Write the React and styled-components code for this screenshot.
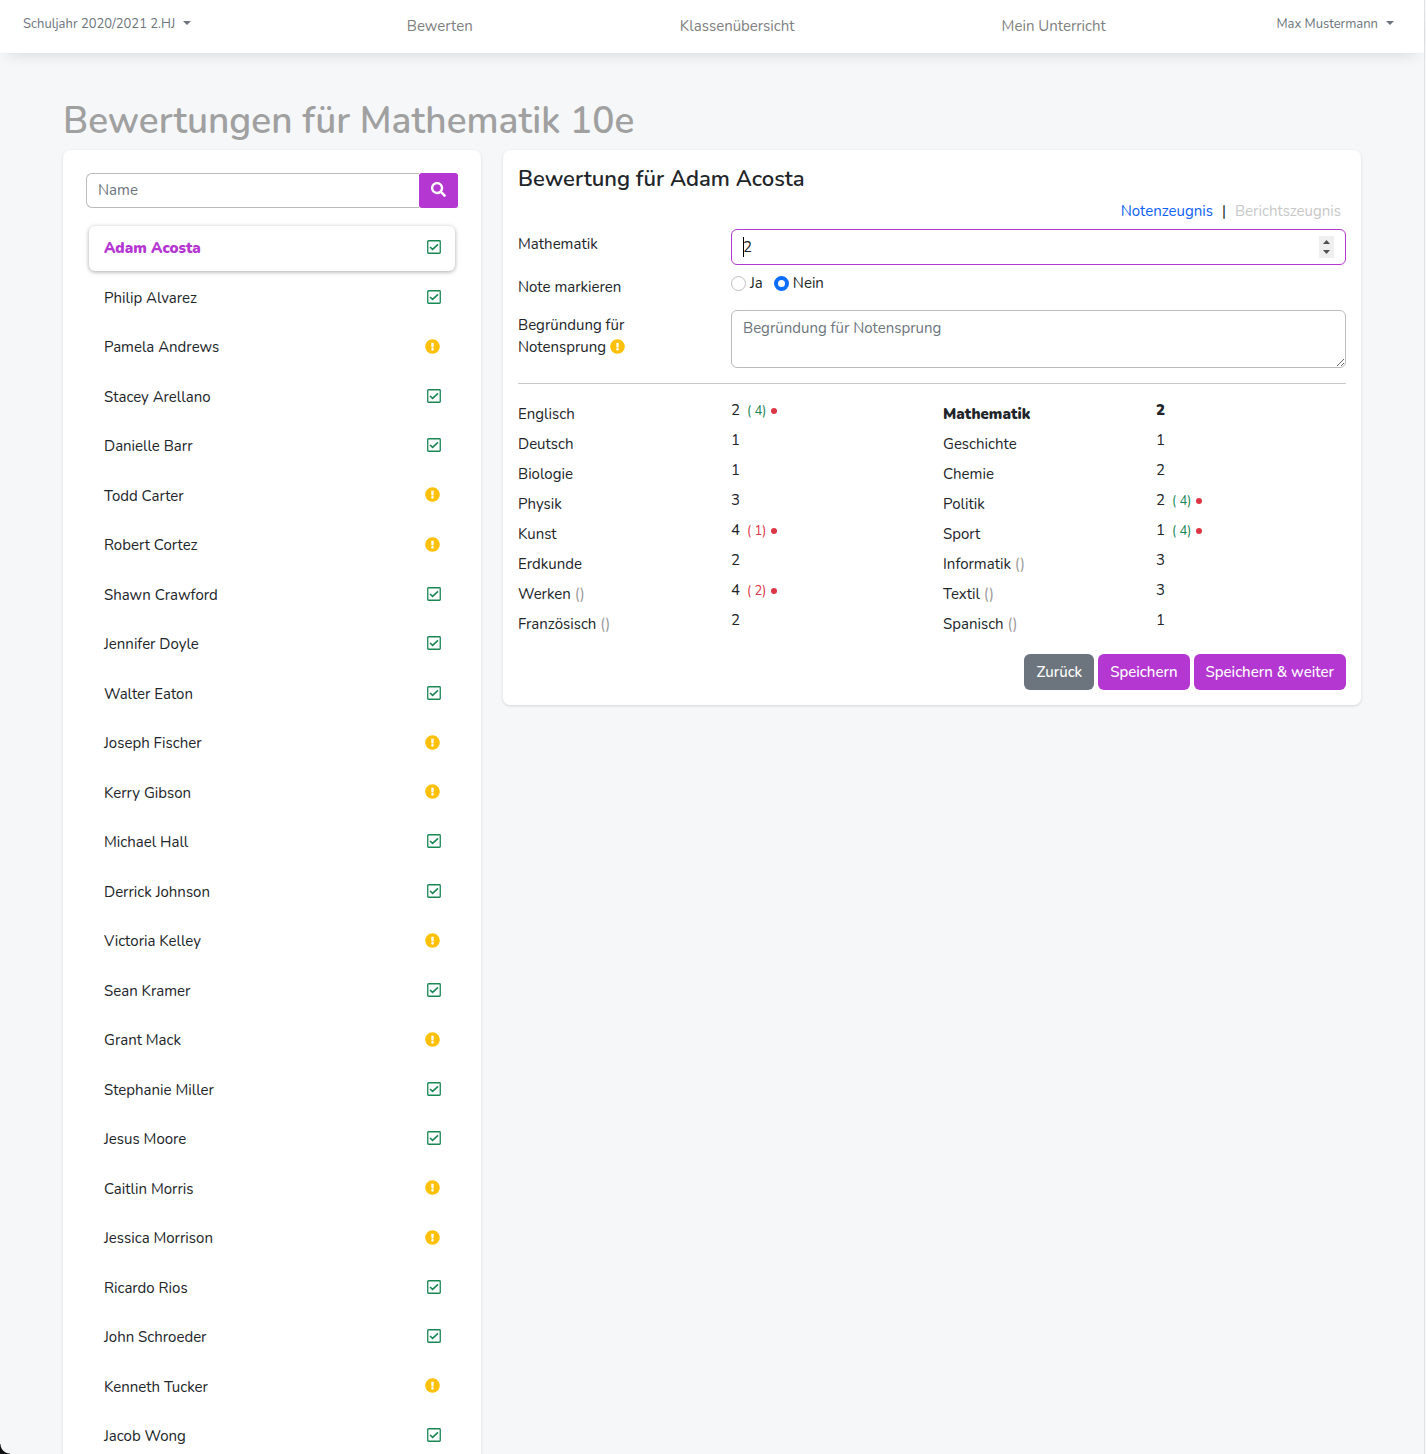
import React from 'react';
import styled, { createGlobalStyle } from 'styled-components';
import { FaSearch, FaExclamationCircle } from 'react-icons/fa';

const Global = createGlobalStyle`
  *, *::before, *::after { box-sizing: border-box; }
  body {
    margin: 0;
    background: #f5f7f9;
    color: #212529;
    font-family: Nunito, Lato, "Open Sans", sans-serif;
    font-size: 15px;
    line-height: 1.5;
  }
  button, input, textarea { font: inherit; color: inherit; }
`;

const Page = styled.div`
  margin-right: 1px;
  border-right: 1px solid #e3e4e6;
`;

const WindowCorner = styled.div`
  position: fixed;
  bottom: 0;
  left: 0;
  width: 10px;
  height: 10px;
  background: radial-gradient(circle at top right, transparent 9px, #111 10px);
`;

const TopBar = styled.header`
  display: flex;
  align-items: flex-start;
  height: 53px;
  padding: 0 30px 0 23px;
  background: #fff;
  box-shadow: 0 8px 16px -8px rgba(0, 0, 0, 0.15);
`;

const MenuButton = styled.button`
  display: flex;
  align-items: center;
  gap: 8px;
  margin: ${(p) => (p.$end ? '0 0 0 67px' : '0 112px 0 0')};
  padding: 14px 0;
  border: 0;
  background: none;
  color: #6c757d;
  font-size: 13px;
  line-height: 20px;
  white-space: nowrap;
  &::after {
    content: '';
    margin-bottom: 2px;
    border: 4px solid transparent;
    border-top-color: currentColor;
    border-bottom: 0;
  }
`;

const Tabs = styled.nav`
  display: flex;
  flex: 1;
  a {
    flex: 1 1 auto;
    padding: 15px 0;
    color: #808080;
    text-align: center;
    text-decoration: none;
    line-height: 22px;
  }
`;

const Main = styled.main`
  padding: 46px 63px 0;
`;

const Title = styled.h1`
  margin: 0 0 6px;
  color: #a0a0a0;
  font-size: 37px;
  font-weight: 600;
  line-height: 45px;
`;

const Columns = styled.div`
  display: flex;
  align-items: flex-start;
  margin: 0 -11px;
`;

const Column = styled.div`
  width: calc(100% * ${(p) => p.$span} / 3);
  padding: 0 11px;
`;

const Card = styled.section`
  padding: ${(p) => p.$pad};
  border-radius: 7px;
  background: #fff;
  box-shadow: 0 1px 3px rgba(0, 0, 0, 0.14);
`;

const Search = styled.form`
  display: flex;
  height: 35px;
  margin-bottom: 18px;
  input {
    flex: 1;
    min-width: 0;
    padding: 0 11px;
    border: 1px solid #bcbcbc;
    border-right: 0;
    border-radius: 6px 0 0 6px;
    background: #fff;
    outline: 0;
  }
  input::placeholder { color: #6c757d; opacity: 1; }
  button {
    display: grid;
    place-items: center;
    width: 39px;
    padding: 0 0 2px;
    border: 0;
    border-radius: 3px;
    background: #b537d2;
    color: #fff;
  }
`;

const Students = styled.ul`
  margin: 0;
  padding: 0 3px;
  list-style: none;
`;

const Student = styled.li`
  margin-bottom: 5px;
  border-radius: 6px;
  box-shadow: ${(p) => (p.$active ? '0 1px 4px rgba(0, 0, 0, 0.35)' : 'none')};
  a {
    display: flex;
    align-items: center;
    justify-content: space-between;
    padding: 11px 14px 11px 15px;
    color: ${(p) => (p.$active ? '#b537d2' : 'inherit')};
    font-weight: ${(p) => (p.$active ? 900 : 400)};
    text-decoration: none;
  }
`;

const Icon = styled.span`
  display: inline-flex;
  justify-content: ${(p) => (p.$ok ? 'flex-end' : 'flex-start')};
  width: 16px;
  padding-bottom: 2px;
  color: ${(p) => (p.$ok ? '#198754' : '#ffc107')};
  vertical-align: -4px;
`;

const CardTitle = styled.h2`
  margin: 0;
  font-size: 22px;
  font-weight: 600;
  line-height: 29px;
`;

const ReportTabs = styled.div`
  display: flex;
  justify-content: flex-end;
  gap: 9px;
  margin: 6px 5px 7px;
  line-height: 22px;
  a { color: #0d62f5; text-decoration: none; }
  a[aria-disabled] { color: #c8c8c8; }
`;

const Field = styled.div`
  display: grid;
  grid-template-columns: 213px 1fr;
  min-height: ${(p) => p.$min};
`;

const Label = styled.label`
  max-width: 140px;
  padding-top: 4px;
  line-height: 22px;
  ${Icon} { vertical-align: -2px; padding: 0; }
`;

const GradeBox = styled.div`
  position: relative;
  height: 36px;
`;

const GradeInput = styled.input`
  width: 100%;
  height: 36px;
  padding: 0 11px;
  border: 1px solid #b537d2;
  border-radius: 6px;
  background: #fff;
  outline: 0;
  appearance: textfield;
  caret-color: transparent;
  &::-webkit-inner-spin-button { appearance: none; }
`;

const Caret = styled.span`
  position: absolute;
  top: 8px;
  left: 12px;
  width: 1px;
  height: 20px;
  background: #000;
`;

const Stepper = styled.svg`
  position: absolute;
  top: 7px;
  right: 12px;
  background: #efefef;
`;

const Choices = styled.div`
  display: flex;
  align-items: flex-start;
  gap: 11px;
  label {
    display: flex;
    align-items: center;
    gap: 4px;
    line-height: 22px;
  }
  input {
    appearance: none;
    width: 15px;
    height: 15px;
    margin: 0;
    border: 1px solid #bfbfbf;
    border-radius: 50%;
    background: #fff;
  }
  input:checked { border: 4px solid #0d6efd; }
`;

const Reason = styled.textarea`
  height: 58px;
  padding: 6px 11px;
  border: 1px solid #bcbcbc;
  border-radius: 6px;
  background: #fff;
  line-height: 22px;
  resize: vertical;
  &::placeholder { color: #6c757d; opacity: 1; }
`;

const Divider = styled.hr`
  height: 1px;
  margin: 15px 0;
  border: 0;
  background: #c8c9ca;
`;

const Grades = styled.dl`
  display: grid;
  grid-template-columns: 1fr 1fr;
  column-gap: 22px;
  margin: 0 0 15px;
`;

const Grade = styled.div`
  display: grid;
  grid-template-columns: 213px 1fr;
  height: 30px;
  line-height: 22px;
  font-weight: ${(p) => (p.$bold ? 900 : 400)};
  dt { padding-top: 4px; }
  dd { display: flex; align-items: center; height: 22px; margin: 0; }
`;

const Muted = styled.span`
  color: #999;
`;

const Previous = styled.span`
  display: flex;
  align-items: center;
  gap: 5px;
  margin-left: 7px;
  padding-top: 2px;
  color: ${(p) => (p.$better ? '#198754' : '#dc3545')};
  font-size: 13px;
  &::after {
    content: '';
    width: 6px;
    height: 6px;
    border-radius: 50%;
    background: #dc3545;
  }
`;

const Actions = styled.div`
  display: flex;
  justify-content: flex-end;
  gap: 4px;
`;

const Button = styled.button`
  height: 36px;
  padding: 0 12px;
  border: 0;
  border-radius: 6px;
  background: ${(p) => (p.$secondary ? '#6c757d' : '#b537d2')};
  color: #fff;
  font-weight: 500;
`;

const students = [
  ['Adam Acosta', 1], ['Philip Alvarez', 1], ['Pamela Andrews', 0], ['Stacey Arellano', 1],
  ['Danielle Barr', 1], ['Todd Carter', 0], ['Robert Cortez', 0], ['Shawn Crawford', 1],
  ['Jennifer Doyle', 1], ['Walter Eaton', 1], ['Joseph Fischer', 0], ['Kerry Gibson', 0],
  ['Michael Hall', 1], ['Derrick Johnson', 1], ['Victoria Kelley', 0], ['Sean Kramer', 1],
  ['Grant Mack', 0], ['Stephanie Miller', 1], ['Jesus Moore', 1], ['Caitlin Morris', 0],
  ['Jessica Morrison', 0], ['Ricardo Rios', 1], ['John Schroeder', 1], ['Kenneth Tucker', 0],
  ['Jacob Wong', 1],
];

const grades = [
  { name: 'Englisch', grade: 2, prev: 4 }, { name: 'Mathematik', grade: 2, bold: true },
  { name: 'Deutsch', grade: 1 }, { name: 'Geschichte', grade: 1 },
  { name: 'Biologie', grade: 1 }, { name: 'Chemie', grade: 2 },
  { name: 'Physik', grade: 3 }, { name: 'Politik', grade: 2, prev: 4 },
  { name: 'Kunst', grade: 4, prev: 1 }, { name: 'Sport', grade: 1, prev: 4 },
  { name: 'Erdkunde', grade: 2 }, { name: 'Informatik', grade: 3, course: true },
  { name: 'Werken', grade: 4, prev: 2, course: true }, { name: 'Textil', grade: 3, course: true },
  { name: 'Französisch', grade: 2, course: true }, { name: 'Spanisch', grade: 1, course: true },
];

const CheckSquare = () => (
  <svg width="14" height="14" viewBox="0 0 14 14" fill="none" stroke="currentColor" aria-hidden="true">
    <rect x="0.75" y="0.75" width="12.5" height="12.5" rx="0.8" strokeWidth="1.3" />
    <path d="M3 7 5.6 9.4 11 4.4" strokeWidth="1.6" />
  </svg>
);

const Status = ({ ok }) => (
  <Icon $ok={ok}>{ok ? <CheckSquare /> : <FaExclamationCircle size={15} />}</Icon>
);

export default function App() {
  return (
    <Page>
      <Global />
      <TopBar>
        <MenuButton type="button">Schuljahr 2020/2021 2.HJ</MenuButton>
        <Tabs>
          <a href="#bewerten">Bewerten</a>
          <a href="#klassen">Klassenübersicht</a>
          <a href="#unterricht">Mein Unterricht</a>
        </Tabs>
        <MenuButton type="button" $end>Max Mustermann</MenuButton>
      </TopBar>
      <Main>
        <Title>Bewertungen für Mathematik 10e</Title>
        <Columns>
          <Column $span={1}>
            <Card $pad="23px">
              <Search>
                <input type="text" placeholder="Name" aria-label="Name" />
                <button type="button" aria-label="Suchen"><FaSearch size={15} /></button>
              </Search>
              <Students>
                {students.map(([name, ok], i) => (
                  <Student key={name} $active={i === 0}>
                    <a href="#schueler">{name}<Status ok={!!ok} /></a>
                  </Student>
                ))}
              </Students>
            </Card>
          </Column>
          <Column $span={2}>
            <Card $pad="15px">
              <CardTitle>Bewertung für Adam Acosta</CardTitle>
              <ReportTabs>
                <a href="#noten">Notenzeugnis</a>
                <span>|</span>
                <a href="#bericht" aria-disabled="true">Berichtszeugnis</a>
              </ReportTabs>
              <Field $min="43px">
                <Label htmlFor="grade">Mathematik</Label>
                <GradeBox>
                  <GradeInput id="grade" type="number" defaultValue="2" autoFocus />
                  <Caret />
                  <Stepper width="15" height="22" viewBox="0 0 15 22" fill="#505050" aria-hidden="true">
                    <path d="M4 8 7.5 4 11 8ZM4 14 7.5 18 11 14Z" />
                  </Stepper>
                </GradeBox>
              </Field>
              <Field $min="38px" role="radiogroup" aria-labelledby="mark">
                <Label as="span" id="mark">Note markieren</Label>
                <Choices>
                  <label><input type="radio" name="mark" />Ja</label>
                  <label><input type="radio" name="mark" defaultChecked />Nein</label>
                </Choices>
              </Field>
              <Field $min="58px">
                <Label htmlFor="reason">Begründung für Notensprung <Status ok={false} /></Label>
                <Reason id="reason" placeholder="Begründung für Notensprung" />
              </Field>
              <Divider />
              <Grades>
                {grades.map((g) => (
                  <Grade key={g.name} $bold={g.bold}>
                    <dt>{g.name}{g.course && <Muted> ()</Muted>}</dt>
                    <dd>
                      {g.grade}
                      {g.prev && <Previous $better={g.prev > g.grade}>{`( ${g.prev})`}</Previous>}
                    </dd>
                  </Grade>
                ))}
              </Grades>
              <Actions>
                <Button type="button" $secondary>Zurück</Button>
                <Button type="button">Speichern</Button>
                <Button type="button">Speichern &amp; weiter</Button>
              </Actions>
            </Card>
          </Column>
        </Columns>
      </Main>
      <WindowCorner />
    </Page>
  );
}
